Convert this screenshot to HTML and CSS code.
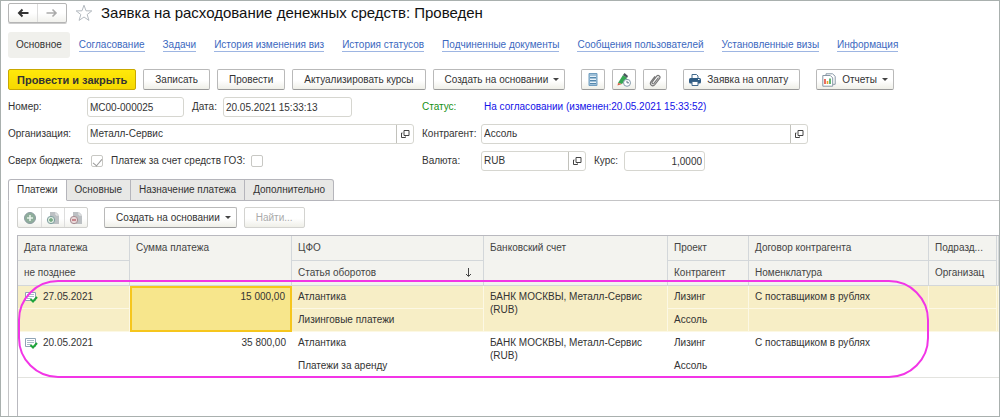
FILE: index.html
```html
<!DOCTYPE html>
<html lang="ru">
<head>
<meta charset="utf-8">
<title>Заявка на расходование денежных средств</title>
<link rel="stylesheet" href="styles.css">
</head>
<body>
<svg class="defs" aria-hidden="true">
  <symbol id="open" viewBox="0 0 10 10"><path d="M4 1.5h5v5H4z M2.5 4H1.5v4.500h4v-1" fill="none" stroke="#444"/></symbol>
  <symbol id="posted" viewBox="0 0 13 12"><path d="M.5 1.500h10v8H.5z" fill="#fff" stroke="#8fa3b5"/><path d="M2 3.500h7M2 5.500h7M2 7.500h4" stroke="#a9bac8"/><path d="M5.500 8l2.500 2.500L12 6" fill="none" stroke="#1fa53a" stroke-width="2"/></symbol>
  <symbol id="doc" viewBox="0 0 14 14"><path d="M4 1h6l3 3v9H4z" fill="#bcc0c3"/><path d="M10 1v3h3" fill="none" stroke="#eee"/></symbol>
</svg>
<div class="window">
  <header class="title-bar">
    <div class="history">
      <button type="button" aria-label="Назад"><svg width="12" height="10" viewBox="0 0 12 10"><path d="M11.500 5H2M5.500 1.500L2 5l3.500 3.500" fill="none" stroke="#333" stroke-width="2"/></svg></button>
      <button type="button" aria-label="Вперед"><svg width="12" height="10" viewBox="0 0 12 10"><path d="M.5 5H10M6.500 1.500L10 5 6.500 8.500" fill="none" stroke="#aaa" stroke-width="1.600"/></svg></button>
    </div>
    <button type="button" class="star" aria-label="В избранное"><svg width="18" height="18" viewBox="0 0 18 18"><path d="M9 1.200l2 5.600 5.800.1-4.600 3.600 1.700 5.900L9 13l-4.900 3.400 1.700-5.900L1.200 6.900 7 6.800z" fill="#fff" stroke="#b4bac0"/></svg></button>
    <h1>Заявка на расходование денежных средств: Проведен</h1>
  </header>

  <nav class="sections">
    <span class="current">Основное</span>
    <a href="#">Согласование</a>
    <a href="#">Задачи</a>
    <a href="#">История изменения виз</a>
    <a href="#">История статусов</a>
    <a href="#">Подчиненные документы</a>
    <a href="#">Сообщения пользователей</a>
    <a href="#">Установленные визы</a>
    <a href="#">Информация</a>
  </nav>

  <div class="commands">
    <div class="group">
      <button type="button" class="btn primary">Провести и закрыть</button>
      <button type="button" class="btn">Записать</button>
      <button type="button" class="btn">Провести</button>
      <button type="button" class="btn">Актуализировать курсы</button>
      <button type="button" class="btn menu">Создать на основании<i class="caret"></i></button>
    </div>
    <div class="group">
      <button type="button" class="btn icon" aria-label="Структура подчиненности"><svg width="10" height="13" viewBox="0 0 10 13"><path d="M1 .5h8v12H1z" fill="#9fc0d8" stroke="#6f9dbf"/><path d="M2 3.500h6M2 6.500h6M2 9.500h6" stroke="#e7f2fa"/><path d="M2 4.500h6M2 7.500h6M2 10.500h6" stroke="#5588ae"/></svg></button>
      <button type="button" class="btn icon" aria-label="Напоминание"><svg width="14" height="14" viewBox="0 0 14 14"><path d="M1 10L6 2l4 3-5 6z" fill="#35a853"/><path d="M6 2l1.500-2L11 3l-1 2z" fill="#49555c"/><path d="M1 10l4 1-4.500 1.500z" fill="#d85f45"/><circle cx="10" cy="9.800" r="3.500" fill="#fff" stroke="#8299aa"/><path d="M10 7.800v2h2" fill="none" stroke="#5c7488"/></svg></button>
      <button type="button" class="btn icon" aria-label="Файлы"><svg width="12" height="14" viewBox="0 0 12 14"><path d="M9.500 4.500L5 10.300c-1 1.200-2.600 0-1.700-1.300L7.500 3.400c1.700-2.100 4.600.1 3 2.300L6 11.500c-2.300 2.900-6 .2-4-2.800L6 3.300" fill="none" stroke="#777" stroke-width="1.200"/></svg></button>
    </div>
    <button type="button" class="btn with-icon"><svg width="12" height="12" viewBox="0 0 12 12"><path d="M3 4.500V.5h4.500L9 2v2.500" fill="#fff" stroke="#41698b"/><rect y="4" width="12" height="5.500" rx="1.500" fill="#315d84"/><path d="M3 7.500h6v4H3z" fill="#fff" stroke="#41698b"/><path d="M9 5.500h1.500" stroke="#fff"/></svg>Заявка на оплату</button>
    <button type="button" class="btn with-icon menu"><svg width="14" height="14" viewBox="0 0 14 14"><path d="M4 2.500V.8h6.500l2.700 2.500v8H11" fill="#fff" stroke="#8797a5"/><path d="M.8 2.500h7.500l2.400 2.400v8.300H.8z" fill="#fff" stroke="#8797a5"/><path d="M3 11V6" stroke="#e34b3d" stroke-width="1.600"/><path d="M5.500 11V8" stroke="#e9a02b" stroke-width="1.600"/><path d="M8 11V5.500" stroke="#3aa455" stroke-width="1.600"/></svg>Отчеты<i class="caret"></i></button>
  </div>

  <form class="details">
    <div class="line">
      <label class="lead" for="num">Номер:</label><input id="num" class="field number" value="МС00-000025">
      <label for="date">Дата:</label><input id="date" class="field date" value="20.05.2021 15:33:13">
    </div>
    <div class="line"><span class="lead status">Статус:</span><span class="status-value">На согласовании (изменен:20.05.2021 15:33:52)</span></div>
    <div class="line">
      <label class="lead" for="org">Организация:</label>
      <div class="field ref grow"><input id="org" value="Металл-Сервис"><button type="button" aria-label="Открыть организацию"><svg><use href="#open"/></svg></button></div>
    </div>
    <div class="line">
      <label class="lead" for="agent">Контрагент:</label>
      <div class="field ref grow"><input id="agent" value="Ассоль"><button type="button" aria-label="Открыть контрагента"><svg><use href="#open"/></svg></button></div>
    </div>
    <div class="line">
      <label class="lead" for="over">Сверх бюджета:</label><input id="over" class="check" type="checkbox" checked>
      <label for="goz">Платеж за счет средств ГОЗ:</label><input id="goz" class="check" type="checkbox">
    </div>
    <div class="line">
      <label class="lead" for="cur">Валюта:</label>
      <div class="field ref currency"><input id="cur" value="RUB"><button type="button" aria-label="Открыть валюту"><svg><use href="#open"/></svg></button></div>
      <label for="rate">Курс:</label><input id="rate" class="field rate" value="1,0000">
    </div>
  </form>

  <div class="tabs" role="tablist">
    <button type="button" role="tab" aria-selected="true">Платежи</button>
    <button type="button" role="tab" aria-selected="false">Основные</button>
    <button type="button" role="tab" aria-selected="false">Назначение платежа</button>
    <button type="button" role="tab" aria-selected="false">Дополнительно</button>
  </div>

  <section class="panel">
    <div class="panel-tools">
      <div class="joined">
        <button type="button" aria-label="Добавить"><svg width="12" height="12" viewBox="0 0 12 12"><circle cx="6" cy="6" r="5.500" fill="#8fae9b" stroke="#8b9ba0"/><path d="M6 3v6M3 6h6" stroke="#e8f3ea" stroke-width="1.600"/></svg></button>
        <button type="button" aria-label="Добавить документ"><svg width="14" height="14" viewBox="0 0 14 14"><use href="#doc"/><circle cx="5" cy="9" r="3.700" fill="#dce9df" stroke="#7f9fa0"/><path d="M5 7v4M3 9h4" stroke="#6fa67c" stroke-width="1.400"/></svg></button>
        <button type="button" aria-label="Исключить документ"><svg width="14" height="14" viewBox="0 0 14 14"><use href="#doc"/><circle cx="5" cy="9" r="3.700" fill="#e8d9d9" stroke="#a78d92"/><path d="M3 9h4" stroke="#c07078" stroke-width="1.600"/></svg></button>
      </div>
      <button type="button" class="btn menu">Создать на основании<i class="caret"></i></button>
      <button type="button" class="btn find" disabled>Найти...</button>
    </div>

    <div class="grid">
      <table>
        <colgroup><col class="c-date"><col class="c-sum"><col class="c-cfo"><col class="c-bank"><col class="c-project"><col><col class="c-dept"><col class="c-rest"></colgroup>
        <thead>
          <tr><th>Дата платежа</th><th rowspan="2">Сумма платежа</th><th>ЦФО</th><th rowspan="2">Банковский счет</th><th>Проект</th><th>Договор контрагента</th><th>Подразд...</th><th rowspan="2" class="rest"></th></tr>
          <tr><th>не позднее</th><th><span class="sorted">Статья оборотов<svg width="7" height="10" viewBox="0 0 7 10"><path d="M3.500 0v8M1 6l2.500 2.500L6 6" fill="none" stroke="#444"/></svg></span></th><th>Контрагент</th><th>Номенклатура</th><th>Организац</th></tr>
        </thead>
        <tbody class="active">
          <tr><td><span class="posted"><svg width="13" height="12"><use href="#posted"/></svg>27.05.2021</span></td><td rowspan="2" class="sum cell-active">15 000,00</td><td>Атлантика</td><td rowspan="2" class="bank">БАНК МОСКВЫ, Металл-Сервис (RUB)</td><td>Лизинг</td><td>С поставщиком в рублях</td><td></td><td rowspan="2" class="rest"></td></tr>
          <tr><td></td><td>Лизинговые платежи</td><td>Ассоль</td><td></td><td></td></tr>
        </tbody>
        <tbody>
          <tr><td><span class="posted"><svg width="13" height="12"><use href="#posted"/></svg>20.05.2021</span></td><td rowspan="2" class="sum">35 800,00</td><td>Атлантика</td><td rowspan="2" class="bank">БАНК МОСКВЫ, Металл-Сервис (RUB)</td><td>Лизинг</td><td>С поставщиком в рублях</td><td></td><td rowspan="2" class="rest"></td></tr>
          <tr><td></td><td>Платежи за аренду</td><td>Ассоль</td><td></td><td></td></tr>
        </tbody>
      </table>
      <div class="marker"></div>
    </div>
  </section>
</div>
</body>
</html>
```
FILE: styles.css
```css
* { box-sizing: border-box; }
body { margin: 0; font: 10px/14px "Liberation Sans", Arial, sans-serif; color: #333; background: #fff; }
button, input { font: inherit; color: inherit; margin: 0; }
button { padding: 0; cursor: pointer; white-space: nowrap; }
.defs { position: absolute; width: 0; height: 0; }
.window { min-height: 100vh; display: flex; flex-direction: column; border: 1px solid #a9b0ae; }

.title-bar { display: flex; align-items: center; padding: 2px 7px 0; height: 22px; }
.history { display: flex; width: 59px; height: 20px; border: 1px solid #b5b5b5; border-radius: 2px; background: linear-gradient(#fff 50%, #f1f1ed); box-shadow: 0 1px 0 #ccc; }
.history button { flex: 1; display: flex; align-items: center; justify-content: center; border: 0; background: none; }
.history button + button { border-left: 1px solid #ddd; }
.star { display: flex; margin: 0 8px; border: 0; background: none; }
h1 { margin: 0; font-size: 15px; line-height: 20px; font-weight: normal; color: #111; white-space: nowrap; }

.sections { display: flex; align-items: center; gap: 18px; margin: 9px 7px 0; white-space: nowrap; }
.current { padding: 6px 8px; margin-right: -9px; border-radius: 3px; background: #f0f0ec; }
.sections a { color: #3b68c0; text-decoration: none; line-height: 12px; border-bottom: 1px solid #9db5e2; }

.commands { display: flex; gap: 16px; margin: 11px 7px 0; }
.group { display: flex; gap: 7px; }
.btn { height: 21px; padding: 0 11px; display: flex; align-items: center; justify-content: center; border: 1px solid #b9b9b9; border-bottom-color: #999; border-radius: 2px; background: linear-gradient(#fff 55%, #efefe8); }
.primary { padding: 0 8px; font-size: 11px; font-weight: bold; border-color: #c9a800; background: linear-gradient(#ffe90a, #f5d800); }
.menu { padding-right: 5px; }
.caret { margin-left: 5px; border: 3px solid transparent; border-top-color: #444; border-bottom: 0; }
.icon { width: 24px; padding: 0; }
.with-icon { padding-left: 5px; }
.with-icon svg { margin-right: 6px; }

.details { display: grid; grid-template-columns: 406fr 386fr; column-gap: 8px; row-gap: 7px; max-width: 807px; margin: 7px 0 0; padding-left: 7px; }
.line { display: flex; align-items: center; height: 20px; white-space: nowrap; }
.lead { width: 79px; flex: none; }
.line:nth-child(even) .lead { width: 59px; }
.line > input + label, .line > div + label { margin: 0 6px 0 8px; }
.field { height: 20px; border: 1px solid #d6d6d0; border-radius: 3px; padding: 0 2px; background: #fff; min-width: 0; }
.number { width: 97px; }
.date { width: 129px; }
.grow { flex: 1; }
.ref { display: flex; padding: 0; }
.ref input { flex: 1; min-width: 0; border: 0; padding: 0 2px; background: none; }
.ref button { width: 17px; display: flex; align-items: center; justify-content: center; border: 0; border-left: 1px solid #c2c2bc; background: none; }
.ref svg { width: 10px; height: 10px; }
.currency { width: 105px; }
.rate { width: 81px; text-align: right; }
.status { color: #159015; }
.status-value { padding-left: 3px; color: #1212e8; }
.check { appearance: none; width: 12px; height: 12px; flex: none; border: 1px solid #c8c8c4; border-radius: 2px; background: #fff; display: grid; place-items: center; }
.lead + .check { margin-left: 4px; }
.check:checked::before { content: ""; width: 4px; height: 8px; border: solid #999; border-width: 0 1px 1px 0; transform: rotate(40deg); }

.tabs { display: flex; margin: 8px 0 0 7px; height: 22px; border-bottom: 1px solid #c4c4c6; }
.tabs button { height: 22px; padding: 0 8px; border: 1px solid #b5b5bb; border-left: 0; background: #e8e8e6; }
.tabs button:first-child { border-left: 1px solid #b5b5bb; border-radius: 3px 0 0; }
.tabs button:last-child { border-radius: 0 3px 0 0; }
.tabs [aria-selected="true"] { background: #fff; border-bottom-color: #fff; }

.panel { flex: 1; display: flex; flex-direction: column; margin-left: 7px; padding: 6px 0 0 8px; border-left: 1px solid #c4c4c6; }
.panel-tools { display: flex; align-items: center; }
.joined { display: flex; height: 21px; margin-right: 16px; border: 1px solid #d0d0cd; border-radius: 2px; background: linear-gradient(#fff 55%, #f1f1ec); }
.joined button { width: 23px; display: flex; align-items: center; justify-content: center; border: 0; background: none; }
.joined button + button { border-left: 1px solid #ddd; }
.find { margin-left: 7px; color: #aaa; border-color: #d3d3d0; }

.grid { position: relative; flex: 1; margin-top: 7px; border: solid #b9b9bf; border-width: 1px 0 0 1px; }
table { width: 100%; table-layout: fixed; border-collapse: separate; border-spacing: 0; }
.c-date { width: 112px; }
.c-sum { width: 162px; }
.c-cfo { width: 192px; }
.c-bank { width: 184px; }
.c-project { width: 81px; }
.c-dept { width: 68px; }
.c-rest { width: 2px; }
th, td { height: 23px; padding: 4px 6px; vertical-align: top; text-align: left; font-weight: normal; white-space: nowrap; overflow: hidden; }
th { height: 25px; padding-top: 5px; background: #f3f3ef; border: solid #d3d7da; border-width: 0 1px 1px 0; color: #444; }
.rest { padding-left: 0; padding-right: 0; }
.sorted { display: flex; justify-content: space-between; align-items: center; padding-right: 5px; }
.active td { background: #f7eec6; border: solid #fcf8e4; border-width: 0 1px 1px 0; }
.posted { display: flex; align-items: center; gap: 5px; padding-left: 1px; }
.sum { text-align: right; }
.active .cell-active { background: #f7e68c; border: 2px solid #f6c61d; padding: 2px 5px; }
td.bank { white-space: normal; line-height: 13px; }
tbody:last-child tr:last-child td, tbody:last-child td[rowspan] { border-bottom: 1px solid #e3e3df; }
.marker { position: absolute; top: 44px; right: 70px; left: 0; height: 98px; border: 2px solid #f235e6; border-radius: 40px; pointer-events: none; }
```
